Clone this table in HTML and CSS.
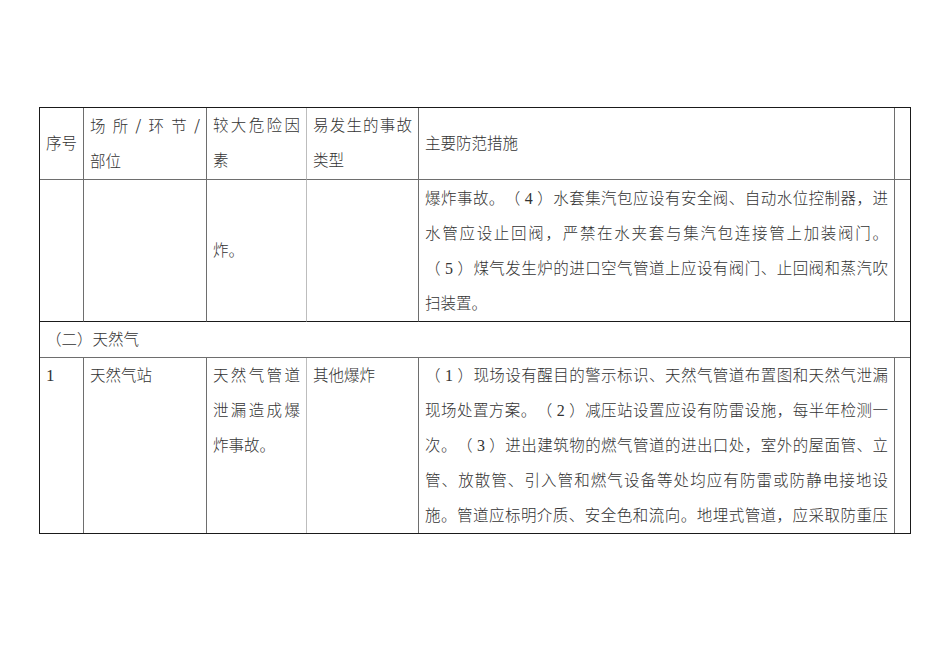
FILE: index.html
```html
<!DOCTYPE html>
<html lang="zh-CN">
<head>
<meta charset="utf-8">
<title>天然气</title>
<link rel="stylesheet" href="styles.css">
</head>
<body>
<div class="page">
  <div class="sheet">
    <div class="cell head mid"><div>序号</div></div>
    <div class="cell head"><div class="j">场所<span class="sl">/</span>环节<span class="sl">/</span></div><div>部位</div></div>
    <div class="cell head"><div class="j">较大危险因</div><div>素</div></div>
    <div class="cell head c4"><div class="j">易发生的事故</div><div>类型</div></div>
    <div class="cell head mid"><div>主要防范措施</div></div>
    <div class="cell head last"></div>

    <div class="cell r2"></div>
    <div class="cell r2"></div>
    <div class="cell r2 mid"><div>炸。</div></div>
    <div class="cell r2 c4"></div>
    <div class="cell r2">
      <div class="j">爆炸事故。（<span class="d">4</span>）水套集汽包应设有安全阀、自动水位控制器，进</div>
      <div class="j">水管应设止回阀，严禁在水夹套与集汽包连接管上加装阀门。</div>
      <div class="j">（<span class="d">5</span>）煤气发生炉的进口空气管道上应设有阀门、止回阀和蒸汽吹</div>
      <div>扫装置。</div>
    </div>
    <div class="cell r2 last"></div>

    <div class="cell section">（二）天然气</div>

    <div class="cell r1"><div class="num">1</div></div>
    <div class="cell r1"><div>天然气站</div></div>
    <div class="cell r1"><div class="j">天然气管道</div><div class="j">泄漏造成爆</div><div>炸事故。</div></div>
    <div class="cell r1 c4"><div>其他爆炸</div></div>
    <div class="cell r1">
      <div class="j">（<span class="d">1</span>）现场设有醒目的警示标识、天然气管道布置图和天然气泄漏</div>
      <div class="j">现场处置方案。（<span class="d">2</span>）减压站设置应设有防雷设施，每半年检测一</div>
      <div class="j">次。（<span class="d">3</span>）进出建筑物的燃气管道的进出口处，室外的屋面管、立</div>
      <div class="j">管、放散管、引入管和燃气设备等处均应有防雷或防静电接地设</div>
      <div class="j">施。管道应标明介质、安全色和流向。地埋式管道，应采取防重压</div>
    </div>
    <div class="cell r1 last"></div>
  </div>
</div>
</body>
</html>
```
FILE: styles.css
```css
html, body {
  margin: 0;
  padding: 0;
  background: #fff;
}

.page {
  padding: 107px 0 0 39px;
}

.sheet {
  display: grid;
  grid-template-columns: 44px 123px 100px 112px 476px 15px;
  width: 870px;
  border: 1px solid #1a1a1a;
  font-family: "Liberation Serif", "Noto Sans CJK SC", serif;
  font-size: 15.5px;
  font-weight: 300;
  line-height: 35px;
  color: #333;
  text-spacing-trim: space-all;
  font-feature-settings: "palt" 0, "halt" 0;
}

.cell {
  padding: 0 6px;
  border-right: 1px solid #6e6e6e;
  border-bottom: 1px solid #6e6e6e;
  white-space: nowrap;
  min-width: 0;
}

.cell.last {
  border-right: none;
  padding: 0;
}

.cell.c4 {
  border-left: 1px solid #bdbdbd;
  margin-left: -1px;
}

.mid {
  display: flex;
  flex-direction: column;
  justify-content: center;
}

.j {
  text-align: justify;
  text-align-last: justify;
}

.d {
  padding: 0 4px;
  font-size: 16px;
}

.sl {
  font-size: 18px;
  font-family: "DejaVu Sans", sans-serif;
  font-weight: 300;
}

.num {
  font-size: 17px;
}

.r2 {
  border-bottom: 1px solid #1a1a1a;
  padding-top: 1px;
}

.r2.mid {
  padding-top: 0;
}

.section {
  grid-column: 1 / -1;
  border-right: none;
}

.r1 {
  border-bottom: none;
}
```
